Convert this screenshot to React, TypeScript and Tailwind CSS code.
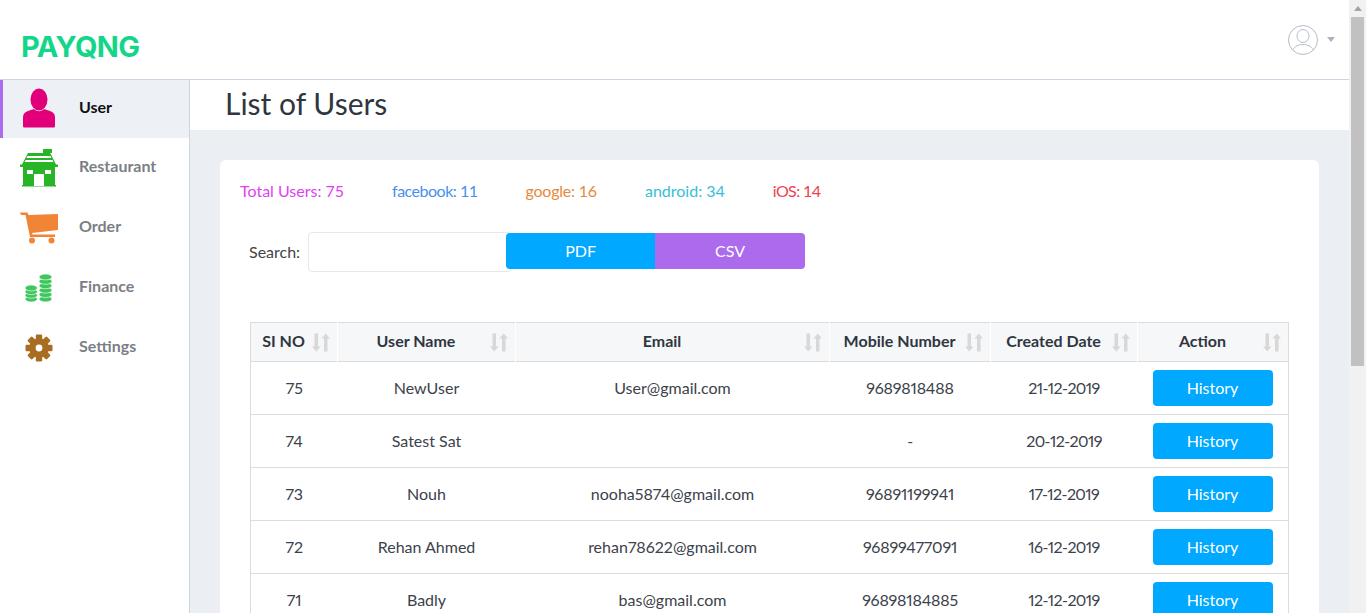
import React from "react";

const font = "font-['Lato','Open_Sans',sans-serif]";

function UserIcon() {
  return (
    <svg width="34" height="40" viewBox="0 0 34 40" className="block">
      <ellipse cx="17" cy="11.5" rx="8.5" ry="11" fill="#e2007a" />
      <path d="M1 38V29c0-3 2-5 5-6l6-2c3 3 7 3 10 0l6 2c3 1 5 3 5 6v9c0 1-.5 1.500-1.500 1.500H2.500C1.500 39.500 1 39 1 38z" fill="#e2007a" />
    </svg>
  );
}
function ShopIcon() {
  return (
    <svg width="38" height="38" viewBox="0 0 38 38" className="block">
      <path d="M23 0h9v4h-2l1 1.500 5 10H38V18h-3v18h1v1.500H2V36h1V18H0v-2.500h2L8 4h15z" fill="#27b427" />
      <path d="M7.500 7h23l.8 2H6.500zM5.500 11h27l.8 2H4.700z" fill="#fff" />
      <rect x="7" y="21" width="6" height="4" fill="#fff" />
      <rect x="25" y="21" width="6" height="4" fill="#fff" />
      <rect x="14" y="25" width="10" height="12" fill="#fff" />
    </svg>
  );
}
function CartIcon() {
  return (
    <svg width="38" height="32" viewBox="0 0 38 32" className="block">
      <path d="M0 0.500h7.500l1 2.500L38 2V18L12 21l.5 1.500H35V25H10L5.500 3H1z" fill="#f28535" />
      <circle cx="12" cy="28.500" r="3" fill="#f28535" />
      <circle cx="31.500" cy="28.500" r="3" fill="#f28535" />
    </svg>
  );
}
function Coins() {
  const stack = (x: number, ys: number[], k: string) =>
    ys.map((y, i) => (
      <ellipse key={k + i} cx={x} cy={y} rx={x < 10 ? 6.200 : 6.500} ry="2.900" fill="#3fc75f" stroke="#fff" strokeWidth="0.600" />
    ));
  return (
    <svg width="28" height="28" viewBox="0 0 28 28" className="block">
      {stack(6.200, [25, 21.300, 17.700, 14], "a")}
      {stack(20.500, [25, 20.600, 16.200, 11.800, 7.400, 3], "b")}
    </svg>
  );
}
function Gear() {
  const teeth = [0, 45, 90, 135, 180, 225, 270, 315];
  return (
    <svg width="28" height="28" viewBox="0 0 28 28" className="block">
      {teeth.map((a) => (
        <rect key={a} x="10.800" y="0.500" width="6.400" height="8" rx="1.200" fill="#a86d20" transform={`rotate(${a} 14 14)`} />
      ))}
      <circle cx="14" cy="14" r="9.800" fill="#a86d20" />
      <circle cx="14" cy="14" r="3.400" fill="#fff" />
    </svg>
  );
}
function SortIcon() {
  return (
    <svg width="18" height="19" viewBox="0 0 18 19" className="block">
      <path d="M2.500 0.500h3.500v13H8.500L4.250 18.500 0 13.500h2.500z" fill="#d8d8d8" />
      <path d="M12 18.500h3.500v-13H18L13.750.500 9.500 5.500H12z" fill="#d8d8d8" />
    </svg>
  );
}

const nav = [
  { label: "User", icon: <UserIcon />, active: true },
  { label: "Restaurant", icon: <ShopIcon /> },
  { label: "Order", icon: <CartIcon /> },
  { label: "Finance", icon: <Coins /> },
  { label: "Settings", icon: <Gear /> },
];

const rows = [
  ["75", "NewUser", "User@gmail.com", "9689818488", "21-12-2019"],
  ["74", "Satest Sat", "", "-", "20-12-2019"],
  ["73", "Nouh", "nooha5874@gmail.com", "96891199941", "17-12-2019"],
  ["72", "Rehan Ahmed", "rehan78622@gmail.com", "96899477091", "16-12-2019"],
  ["71", "Badly", "bas@gmail.com", "96898184885", "12-12-2019"],
];

const heads = ["SI NO", "User Name", "Email", "Mobile Number", "Created Date", "Action"];

export default function App() {
  return (
    <div className={`${font} flex h-screen overflow-hidden bg-white text-[#333a44]`}>
      <div className="flex min-w-0 flex-1 flex-col">
        <header className="flex h-20 shrink-0 items-center justify-between border-b border-[#cbd5e0] pl-[21px] pr-[14px]">
          <span className="pt-[13px] text-[29px] font-bold leading-none tracking-[-0.6px] text-[#14d68a] font-['Inter',sans-serif]">PAYQNG</span>
          <div className="flex items-center gap-[8px] pl-[1px]">
            <svg width="32" height="32" viewBox="0 0 32 32" fill="none" stroke="#b4bdc8" strokeWidth="1" className="block">
              <circle cx="16" cy="16" r="14.500" />
              <ellipse cx="16" cy="12" rx="6" ry="6.500" />
              <path d="M5.500 26c2.500-4 6-5.500 10.500-5.500s8 1.500 10.500 5.500" />
            </svg>
            <span className="h-0 w-0 border-x-[4px] border-t-[5px] border-x-transparent border-t-[#aab4bf]" />
          </div>
        </header>
        <div className="flex min-h-0 flex-1">
          <aside className="w-[190px] shrink-0 border-r border-[#cbd5e0]">
            {nav.map((n) => (
              <div
                key={n.label}
                className={`flex items-center ${n.active ? "h-[58px] border-l-[3px] border-[#ab6bec] bg-[#edf1f5] text-[#111]" : "h-[60px] border-l-[3px] border-transparent text-[#7b7f85]"}`}
              >
                <span className={`flex w-[76px] shrink-0 justify-center pr-[4px] ${n.active ? "pb-[2px]" : ""}`}>{n.icon}</span>
                <span className="pb-[4px] text-[16px] font-bold">{n.label}</span>
              </div>
            ))}
          </aside>
          <main className="min-w-0 flex-1 bg-[#ebeef2]">
            <div className="flex h-[50px] items-center bg-white pb-[4px] pl-[35px]">
              <h1 className="text-[30px] font-normal leading-none text-[#2f3640]">List of Users</h1>
            </div>
            <section className="mx-[30px] mt-[30px] rounded-[6px] bg-white pl-[20px] pr-[30px] pt-[21px]">
              <div className="flex h-[20px] items-center gap-[48px] text-[16px] leading-none">
                <span className="text-[#e13ff0]">Total Users: 75</span>
                <span className="tracking-[-0.5px] text-[#4a8ff0]">facebook: 11</span>
                <span className="tracking-[-0.2px] text-[#e58a3c]">google: 16</span>
                <span className="text-[#36bfd8]">android: 34</span>
                <span className="tracking-[-0.6px] text-[#f0404f]">iOS: 14</span>
              </div>
              <div className="mt-[31px] flex items-start pl-[9px]">
                <span className="mr-[8px] self-center text-[16px] text-[#444]">Search:</span>
                <input className="h-[40px] w-[204px] rounded-[4px] border border-[#e8e8e8] outline-none" aria-label="Search" />
                <button className="-ml-[6px] mt-[1px] h-[36px] w-[149px] rounded-l-[4px] bg-[#00a8ff] text-[16px] text-white">PDF</button>
                <button className="mt-[1px] h-[36px] w-[150px] rounded-r-[4px] bg-[#ab6bec] text-[16px] text-white">CSV</button>
              </div>
              <table className="ml-[10px] mt-[50px] w-[1038px] table-fixed border-collapse border border-[#dcdcdc] text-center text-[16px]">
                <colgroup>
                  <col className="w-[87px]" />
                  <col className="w-[178px]" />
                  <col className="w-[314px]" />
                  <col className="w-[161px]" />
                  <col className="w-[147px]" />
                  <col className="w-[151px]" />
                </colgroup>
                <thead>
                  <tr className="h-[39px] border-b border-[#dcdcdc] bg-[#f6f7f9]">
                    {heads.map((h, i) => (
                      <th key={h} className={`relative pb-[2px] pr-[21px] text-[16px] font-bold text-[#2f3640] ${i < 5 ? "border-r border-[#fff]" : ""}`}>
                        {h}
                        <span className="absolute right-[7px] top-[10px]"><SortIcon /></span>
                      </th>
                    ))}
                  </tr>
                </thead>
                <tbody>
                  {rows.map((r) => (
                    <tr key={r[0]} className="h-[53px] border-b border-[#dcdcdc] text-[#3c424b]">
                      {r.map((c, i) => (
                        <td key={i} className={`p-0 proportional-nums ${i === 4 ? "tracking-[-0.6px]" : ""} ${i === 3 ? "tracking-[-0.2px]" : ""}`}>{c}</td>
                      ))}
                      <td className="p-0">
                        <button className="ml-[15px] block h-[36px] w-[120px] rounded-[4px] bg-[#00a8ff] text-[16px] text-white">History</button>
                      </td>
                    </tr>
                  ))}
                </tbody>
              </table>
            </section>
          </main>
        </div>
      </div>
      <div className="flex w-[17px] shrink-0 flex-col items-center bg-[#f1f1f1]">
        <span className="mt-[6px] h-0 w-0 border-x-[4px] border-b-[5px] border-x-transparent border-b-[#a3a3a3]" />
        <span className="mt-[6px] h-[349px] w-[13px] bg-[#c1c1c1]" />
      </div>
    </div>
  );
}
